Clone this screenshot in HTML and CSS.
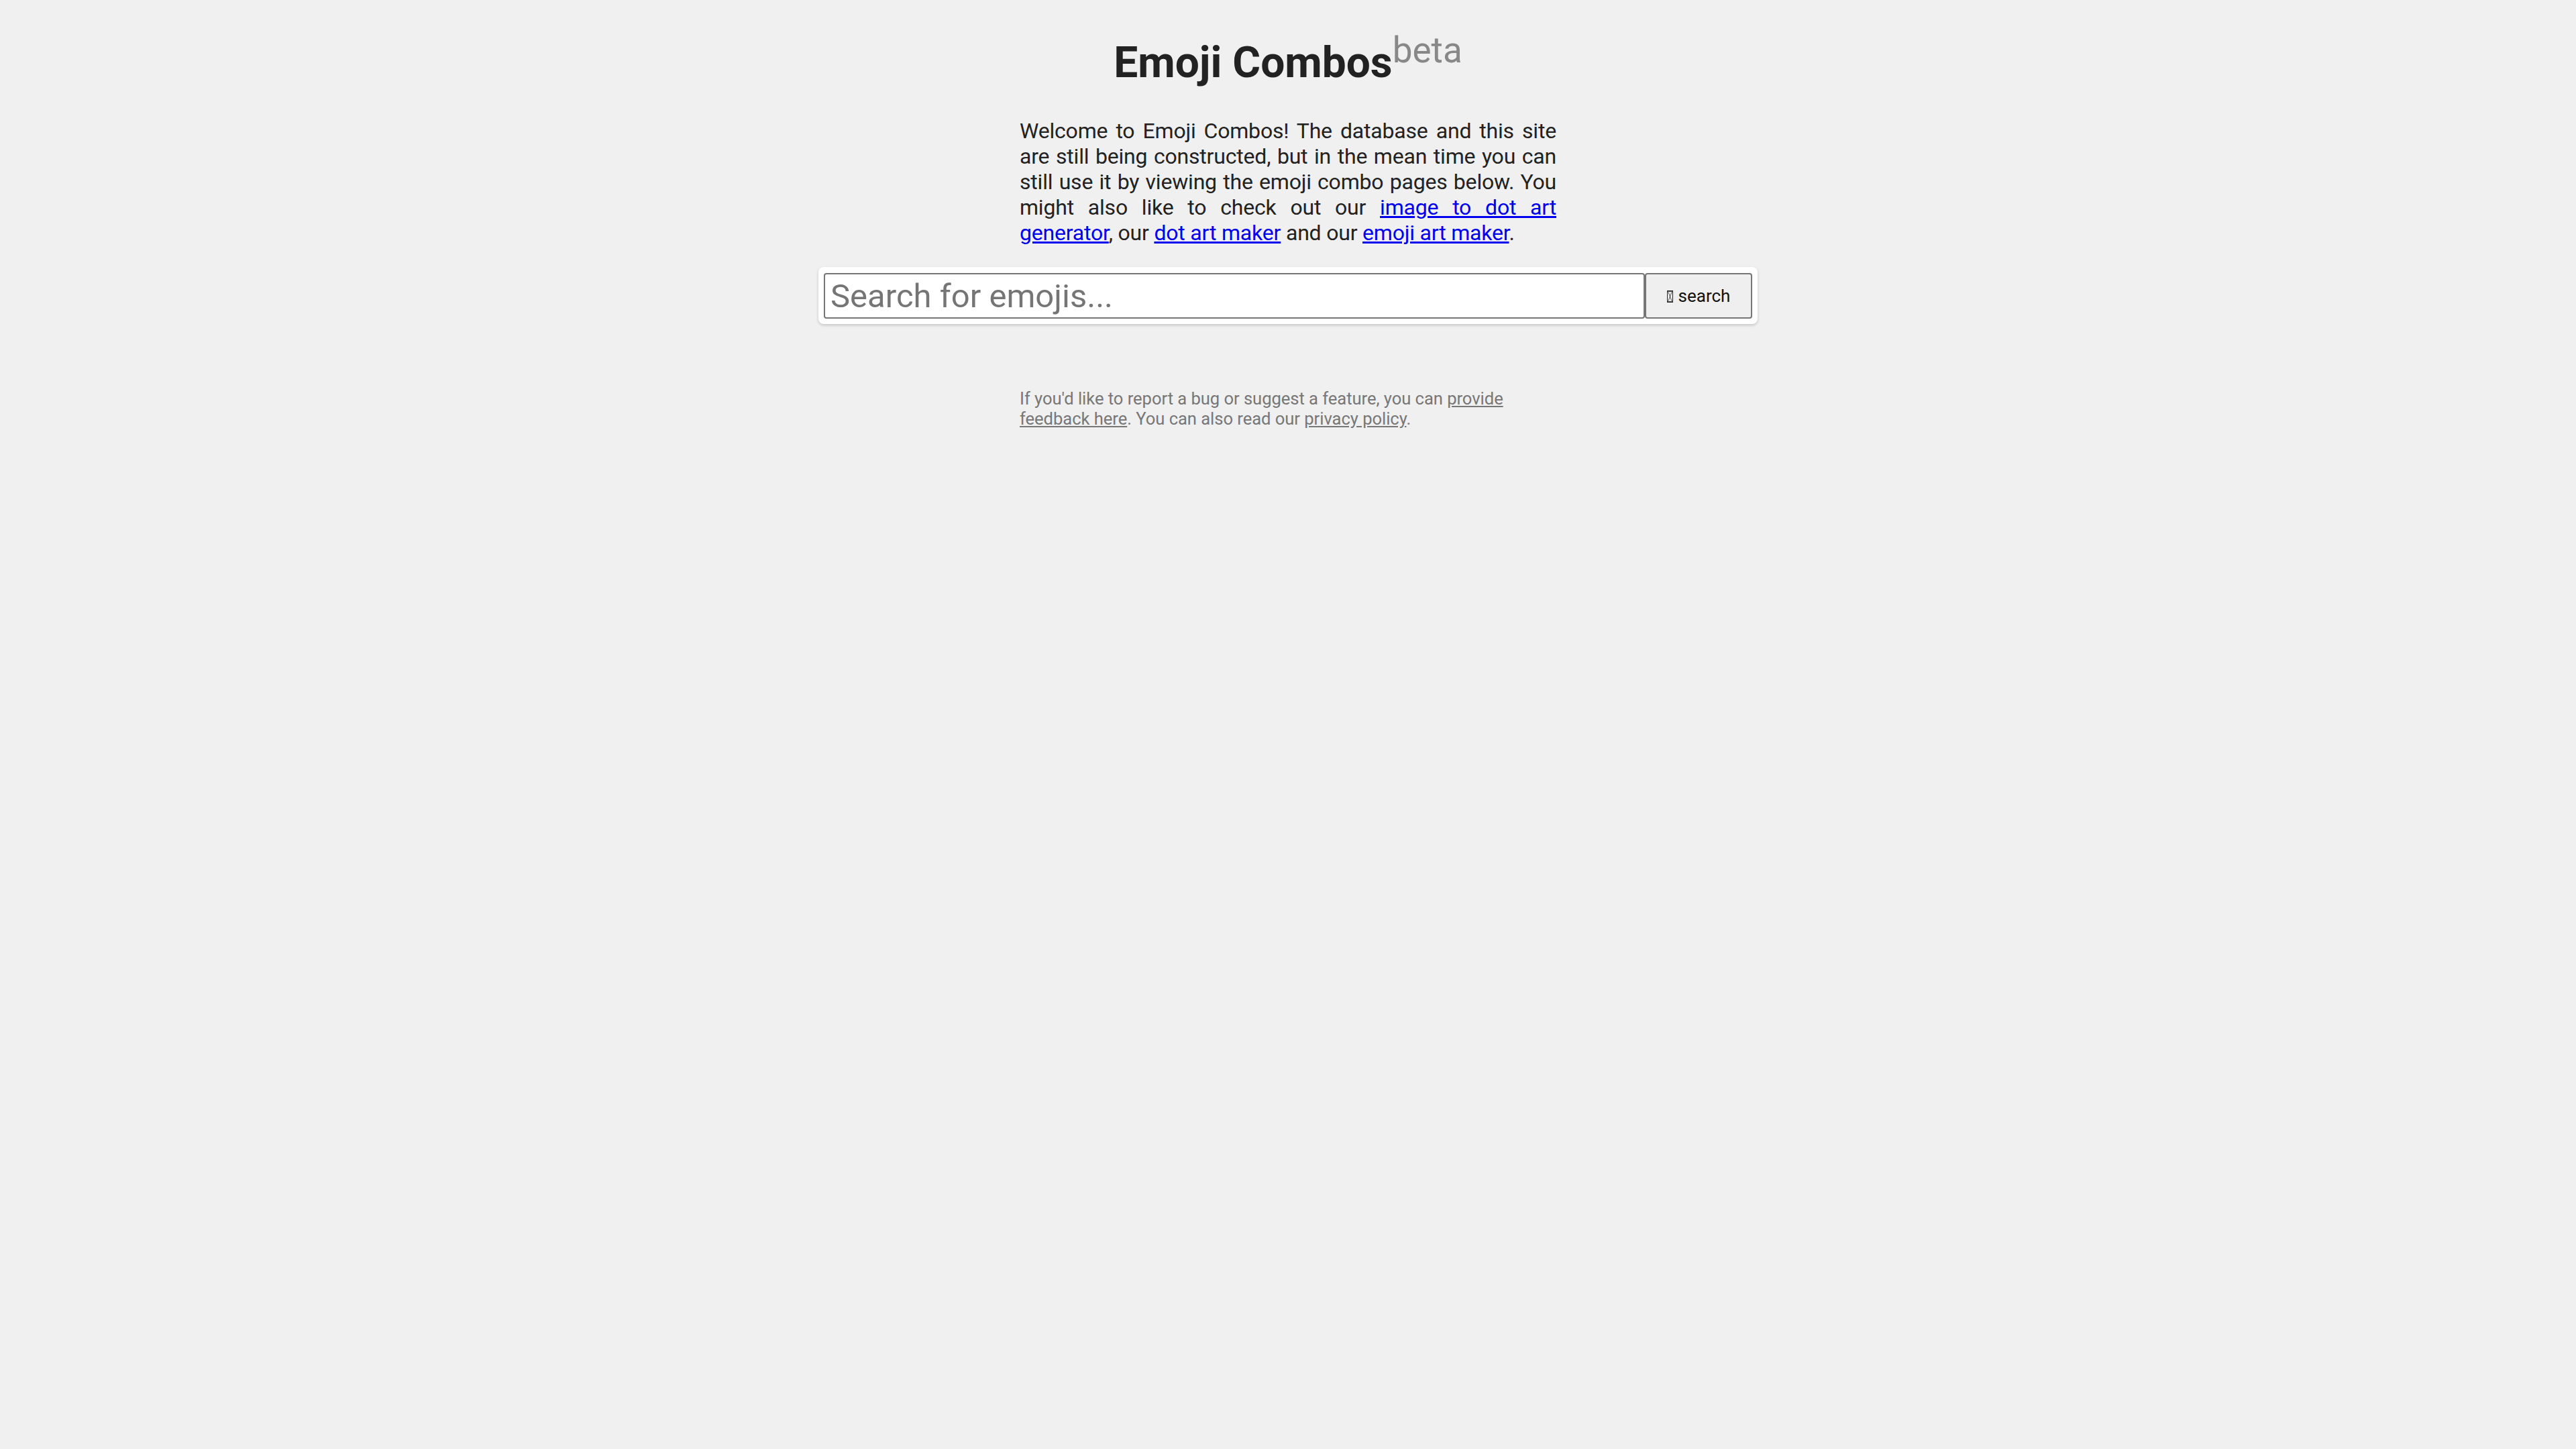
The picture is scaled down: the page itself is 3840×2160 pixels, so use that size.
FILE: index.html
```html
<!DOCTYPE html>
<html lang="en">
<head>
<meta charset="utf-8">
<title>Emoji Combos</title>
<link rel="stylesheet" href="styles.css">
</head>
<body>
<main class="page">
  <h1 class="title">Emoji Combos<sup class="beta">beta</sup></h1>
  <p class="intro">Welcome to Emoji Combos! The database and this site are still being constructed, but in the mean time you can still use it by viewing the emoji combo pages below. You might also like to check out our <a href="#">image to dot art generator</a>, our <a href="#">dot art maker</a> and our <a href="#">emoji art maker</a>.</p>
  <form class="search">
    <input class="search-input" type="text" placeholder="Search for emojis...">
    <button class="search-btn" type="button"><svg class="tofu" width="9" height="18" viewBox="0 0 9 18"><rect x="0.5" y="0.5" width="8" height="17" fill="none" stroke="#222" stroke-width="1"/><path d="M1.5 1.5 L7.5 16.5 M7.5 1.5 L1.5 16.5 M1.5 1.5 H7.5 M1.5 16.5 H7.5" fill="none" stroke="#222" stroke-width="0.8"/></svg> search</button>
  </form>
  <p class="footer">If you'd like to report a bug or suggest a feature, you can <a href="#">provide feedback here</a>. You can also read our <a href="#">privacy policy</a>.</p>
</main>
</body>
</html>
```
FILE: styles.css
```css
html, body {
  margin: 0;
  padding: 0;
}
body {
  background: #f0f0f0;
  font-family: Roboto, "Liberation Sans", sans-serif;
  font-size: 32px;
  color: #222;
}
.page {
  display: flex;
  flex-direction: column;
  align-items: center;
}
.title {
  margin: 56px 0 0;
  font-size: 64px;
  font-weight: 700;
  line-height: 75px;
  color: #222;
  text-align: center;
}
.beta {
  font-size: 53px;
  font-weight: 400;
  color: #888;
  line-height: 0;
}
.intro {
  width: 800px;
  margin: 45px 0 0;
  text-align: justify;
  line-height: 38px;
  letter-spacing: -0.2px;
}
.intro a {
  color: #0000ee;
}
.search {
  display: flex;
  width: 1384px;
  margin: 32px 0 0;
  padding: 9px 8px 8px;
  background: #fff;
  border-radius: 8px;
  box-shadow: 0 2px 4px rgba(0, 0, 0, 0.18);
}
.search-input {
  flex: 1;
  min-width: 0;
  height: 68px;
  box-sizing: border-box;
  margin: 0;
  padding: 0 8px;
  border: 2px solid #767676;
  border-radius: 4px;
  font-family: Roboto, "Liberation Sans", sans-serif;
  font-size: 49px;
  color: #222;
  background: #fff;
}
.search-input::placeholder {
  color: #757575;
}
.search-btn {
  width: 160px;
  height: 68px;
  box-sizing: border-box;
  margin: 0;
  padding: 0;
  border: 2px solid #767676;
  border-radius: 4px;
  background: #efefef;
  font-family: Roboto, "Liberation Sans", sans-serif;
  font-size: 26px;
  color: #111;
  display: flex;
  align-items: center;
  justify-content: center;
  gap: 8px;
}
.tofu {
  display: block;
  margin-top: 2px;
}
.footer {
  width: 800px;
  margin: 96px 0 0;
  font-size: 25.6px;
  line-height: 30px;
  color: #777;
  letter-spacing: -0.05px;
}
.footer a {
  color: #777;
}
```
